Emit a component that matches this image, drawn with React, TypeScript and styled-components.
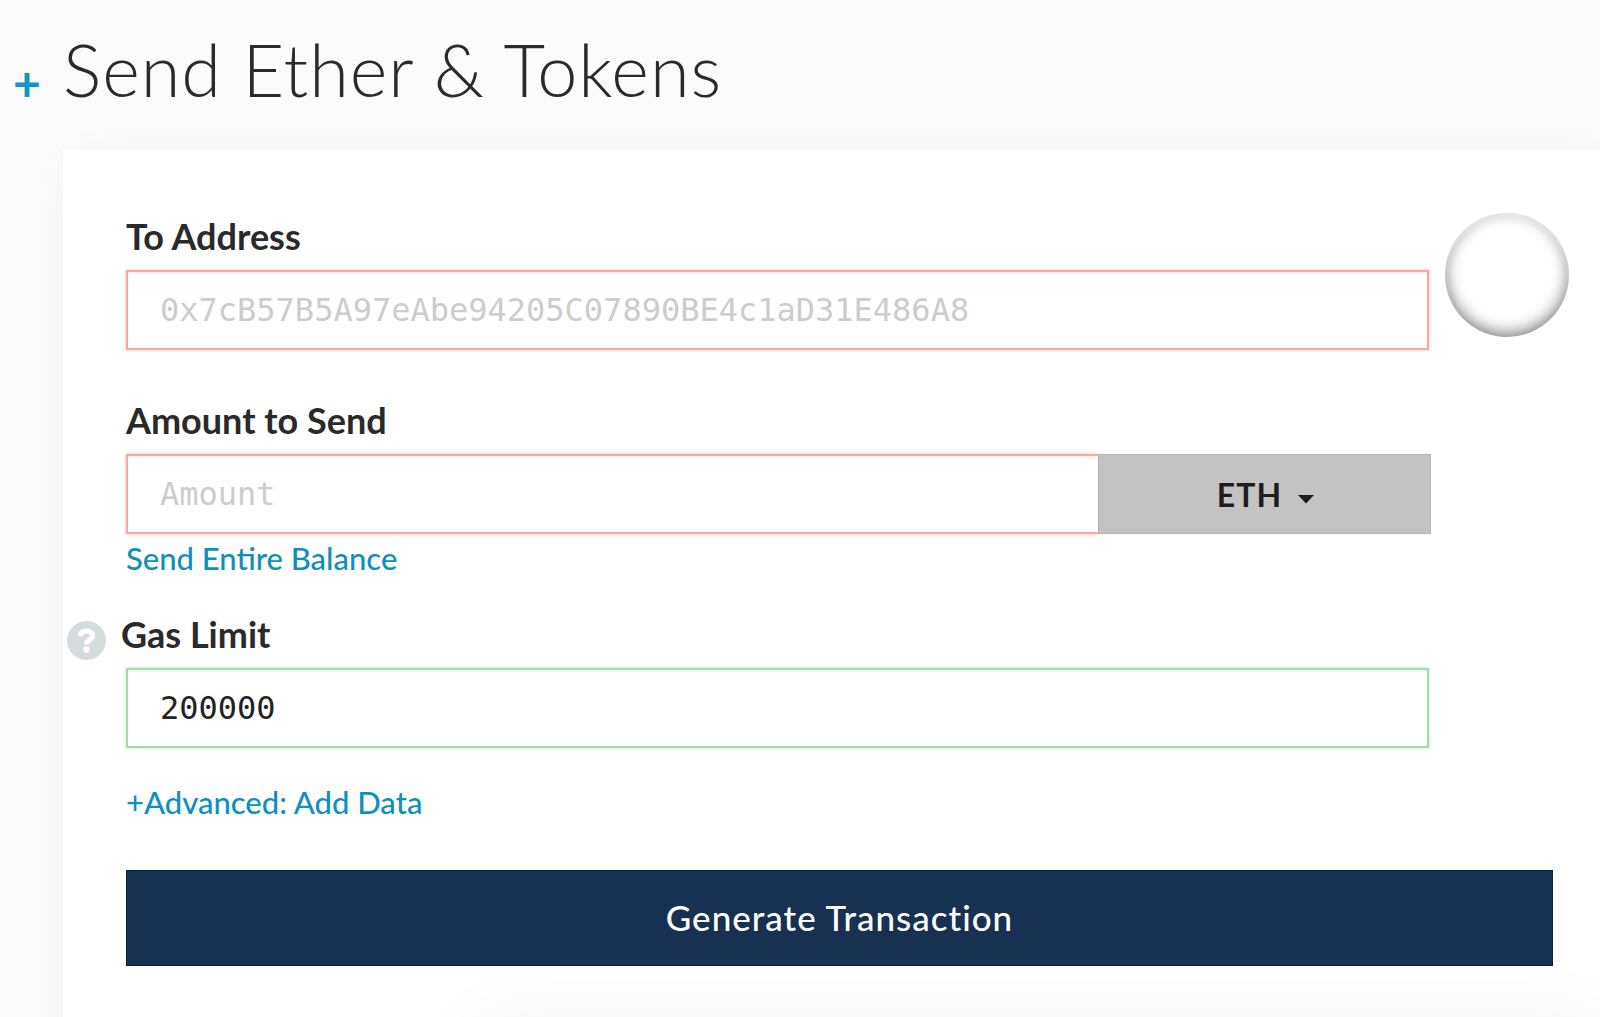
import React, { useState } from "react";
import styled, { createGlobalStyle } from "styled-components";

const GlobalStyle = createGlobalStyle`
  *, *::before, *::after { box-sizing: border-box; }
  body {
    margin: 0;
    background: #fbfbfb;
    color: #2a2a2a;
    font-family: Lato, "Open Sans", sans-serif;
  }
`;

const Page = styled.main`
  height: 100vh;
  overflow: hidden;
`;

const Header = styled.header`
  display: flex;
  align-items: center;
  height: 150px;
  padding: 0 16px 12px 13px;
`;

const Expand = styled.button`
  width: 50px;
  margin-top: 28px;
  padding: 0;
  border: 0;
  background: none;
  color: #0e97c0;
  font: 700 48px/56px Lato, sans-serif;
  text-align: left;
  cursor: pointer;
`;

const Title = styled.h1`
  margin: 0;
  font-size: 72px;
  font-weight: 300;
  line-height: 84px;
  letter-spacing: 1px;
`;

const Card = styled.section`
  margin-left: 63px;
  padding: 64px 31px 64px 63px;
  background: #fff;
  box-shadow: 16px 16px 48px rgba(0, 0, 0, 0.07);
`;

const Form = styled.form`
  display: grid;
  grid-template-columns: 1fr 124px;
  column-gap: 16px;
`;

const Fields = styled.div`
  display: flex;
  flex-direction: column;
`;

const Group = styled.div<{ $gap: number }>`
  margin-bottom: ${(p) => p.$gap}px;
`;

const LabelRow = styled.div<{ $outdent?: boolean }>`
  display: flex;
  align-items: flex-start;
  gap: 15px;
  height: 44px;
  margin: 0 0 12px ${(p) => (p.$outdent ? "-59px" : "0")};
`;

const Label = styled.label`
  font-size: 36px;
  font-weight: 700;
  line-height: 44px;
`;

const HelpButton = styled.button`
  display: flex;
  padding: 9px 0 0;
  border: 0;
  background: none;
  cursor: pointer;
`;

const Input = styled.input<{ $valid?: boolean }>`
  display: block;
  flex: 1;
  width: 100%;
  min-width: 0;
  height: 80px;
  padding: 0 32px;
  border: 2px solid ${(p) => (p.$valid ? "#a5dba6" : "#f9a9a4")};
  border-radius: 0;
  outline: 0;
  background: #fff;
  box-shadow: inset 0 2px 2px rgba(0, 0, 0, 0.05),
    0 0 3px ${(p) => (p.$valid ? "rgba(93, 186, 90, 0.4)" : "rgba(244, 67, 54, 0.35)")};
  color: #222;
  font: 400 32px "DejaVu Sans Mono", monospace;
  &::placeholder { color: #cdcdcd; opacity: 1; }
`;

const InputRow = styled.div`
  display: flex;
  margin-right: -2px;

  ${Input} {
    border-right: 0;
  }
`;

const UnitBox = styled.div`
  position: relative;
  width: 333px;
`;

const UnitSelect = styled.select`
  appearance: none;
  display: block;
  width: 100%;
  height: 80px;
  padding: 0 30px 0 0;
  border: 1px solid #b3b3b3;
  border-radius: 0;
  background: #c3c3c3;
  color: #1d1d1d;
  font: 700 32px Lato, sans-serif;
  letter-spacing: 1px;
  text-align: center;
  text-align-last: center;
  cursor: pointer;
`;

const Caret = styled.svg`
  position: absolute;
  top: 41px;
  left: calc(50% + 33px);
  pointer-events: none;
`;

const Link = styled.a`
  display: block;
  width: fit-content;
  margin-top: 4px;
  color: #0e90bf;
  font-size: 31px;
  font-weight: 500;
  line-height: 40px;
  text-decoration: none;
`;

const Identicon = styled.div`
  width: 124px;
  height: 124px;
  margin-top: -1px;
  border-radius: 50%;
  box-shadow: inset 0 4px 4px rgba(255, 255, 255, 0.5), inset 0 -3px 16px rgba(0, 0, 0, 0.55);
`;

const Submit = styled.button`
  grid-column: 1 / -1;
  height: 96px;
  margin: 48px 16px 0 0;
  padding: 0 0 2px;
  border: 1px solid #0b2145;
  background: #163151;
  color: #fff;
  font: 500 35px Lato, sans-serif;
  letter-spacing: 1px;
  cursor: pointer;
`;

const NextPanel = styled.div`
  height: 200px;
  margin: 58px -31px 0 354px;
  background: #fff;
  box-shadow: 0 0 80px rgba(0, 0, 0, 0.06);
`;

export default function App() {
  const [to, setTo] = useState("");
  const [amount, setAmount] = useState("");
  const [gas, setGas] = useState("200000");

  return (
    <Page>
      <GlobalStyle />
      <Header>
        <Expand type="button">+</Expand>
        <Title>Send Ether &amp; Tokens</Title>
      </Header>
      <Card>
        <Form onSubmit={(e) => e.preventDefault()}>
          <Fields>
            <Group $gap={48}>
              <LabelRow>
                <Label htmlFor="to">To Address</Label>
              </LabelRow>
              <Input
                id="to"
                value={to}
                onChange={(e) => setTo(e.target.value)}
                placeholder="0x7cB57B5A97eAbe94205C07890BE4c1aD31E486A8"
              />
            </Group>
            <Group $gap={34}>
              <LabelRow>
                <Label htmlFor="amount">Amount to Send</Label>
              </LabelRow>
              <InputRow>
                <Input
                  id="amount"
                  value={amount}
                  onChange={(e) => setAmount(e.target.value)}
                  placeholder="Amount"
                />
                <UnitBox>
                  <UnitSelect aria-label="Unit" defaultValue="ETH">
                    <option>ETH</option>
                  </UnitSelect>
                  <Caret width="16" height="9" viewBox="0 0 16 9" aria-hidden="true">
                    <path d="M0 0h16L8 8.5z" fill="#1d1d1d" />
                  </Caret>
                </UnitBox>
              </InputRow>
              <Link href="#balance">Send Entire Balance</Link>
            </Group>
            <Group $gap={30}>
              <LabelRow $outdent>
                <HelpButton type="button" aria-label="Help">
                  <svg width="39" height="39" viewBox="0 0 39 39" aria-hidden="true">
                    <circle cx="19.5" cy="19.5" r="19.5" fill="#d5dcdf" />
                    <path
                      d="M13.2 15.2C13.7 11.5 16 9.9 19.4 9.9c3.6 0 6.1 1.9 6.1 4.7 0 4.2-6.1 4.2-6.1 8.8"
                      fill="none"
                      stroke="#fff"
                      strokeWidth="5"
                    />
                    <circle cx="19.3" cy="28.5" r="3.2" fill="#fff" />
                  </svg>
                </HelpButton>
                <Label htmlFor="gas">Gas Limit</Label>
              </LabelRow>
              <Input id="gas" $valid value={gas} onChange={(e) => setGas(e.target.value)} />
            </Group>
            <Link href="#advanced">+Advanced: Add Data</Link>
          </Fields>
          <Identicon />
          <Submit type="submit">Generate Transaction</Submit>
        </Form>
        <NextPanel />
      </Card>
    </Page>
  );
}
